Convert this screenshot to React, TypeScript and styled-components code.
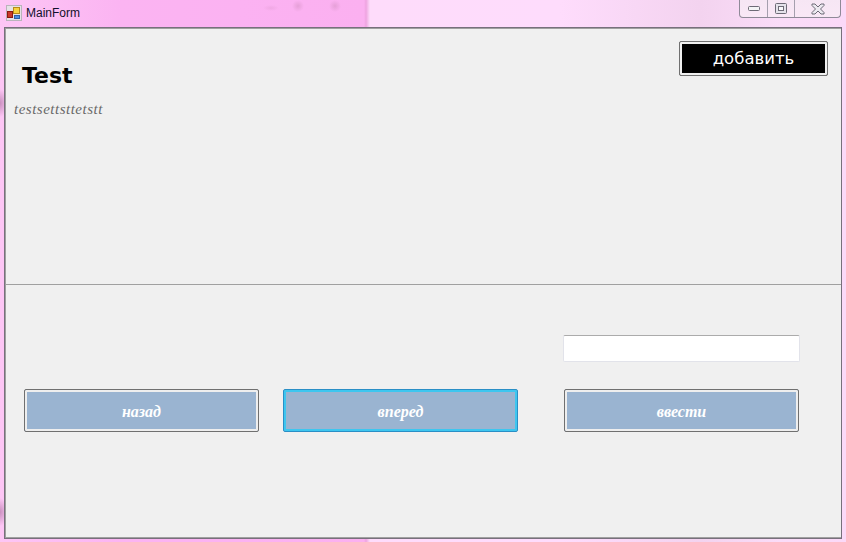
import React from 'react'
import styled, { createGlobalStyle } from 'styled-components'

const GlobalStyle = createGlobalStyle`
    html, body {
        margin: 0;
        padding: 0;
    }
    body {
        width: 846px;
        height: 542px;
        overflow: hidden;
        font-family: "Liberation Sans", Arial, sans-serif;
    }
`

const Window = styled.div`
    width: 846px;
    height: 542px;
    box-sizing: border-box;
    display: flex;
    flex-direction: column;
    padding: 0 4px 3px 4px;
    background:
        radial-gradient(ellipse 8px 14px at 0px 103px, #c98fbe, transparent),
        radial-gradient(ellipse 8px 14px at 0px 512px, #c98fbe, transparent),
        radial-gradient(ellipse 6px 6px at 298px 6px, #e6a0d8, transparent),
        radial-gradient(ellipse 6px 6px at 335px 6px, #e6a0d8, transparent),
        radial-gradient(ellipse 8px 3px at 271px 8px, #f0a8e4, transparent),
        linear-gradient(90deg,
            #fdc6f5 0px, #fbb4f2 120px, #fbb2f2 240px, #fbb0f0 364px, #eea4e0 366px,
            #fedcfb 370px, #fedcfc 560px, #f3d3ef 700px, #fadcf8 780px, #fbd9f8 846px);
`

const TitleBar = styled.div`
    height: 27px;
    flex: none;
    display: flex;
    justify-content: space-between;
    align-items: flex-start;
    margin-right: -1px;
`

const TitleLeft = styled.div`
    display: flex;
    align-items: center;
    gap: 4px;
    height: 26px;
    padding-left: 2px;
    font-size: 12px;
    color: #10102a;
`

const CaptionGroup = styled.div`
    display: flex;
    height: 17px;
    margin-right: 2px;
    border: 1px solid #8f8a98;
    border-top: none;
    border-radius: 0 0 4px 4px;
    background: linear-gradient(180deg, #f6e6f4, #f9e8f6);
`

const CaptionButton = styled.div<{ $w: number; $last?: boolean }>`
    width: ${p => p.$w}px;
    display: flex;
    align-items: center;
    justify-content: center;
    box-sizing: border-box;
    border-right: ${p => (p.$last ? 'none' : '1px solid #a59fae')};
`

const Frame = styled.div`
    flex: 1;
    display: flex;
    flex-direction: column;
    min-height: 0;
    border: 1px solid #77707c;
    box-shadow: inset 1px 1px 0 #a0a0a0, inset 0 -1px 0 #a0a0a0;
    padding: 1px 0 1px 1px;
    background: #f0f0f0;
`

const TopPanel = styled.div`
    height: 256px;
    flex: none;
    box-sizing: border-box;
    display: flex;
    justify-content: space-between;
    align-items: flex-start;
    border-bottom: 1px solid #a0a0a0;
    padding: 12px 13px 0 8px;
`

const Intro = styled.div`
    display: flex;
    flex-direction: column;
    align-items: flex-start;
`

const Heading = styled.h1`
    margin: 23px 0 0 8px;
    font-family: "DejaVu Sans", Verdana, sans-serif;
    font-weight: 700;
    font-size: 22px;
    line-height: 24px;
    color: #000;
`

const Subtitle = styled.p`
    margin: 13px 0 0 0;
    font-family: "Liberation Serif", Cambria, serif;
    font-style: italic;
    font-size: 15px;
    letter-spacing: 0.5px;
    line-height: 16px;
    color: #696969;
`

const AddButton = styled.button`
    width: 149px;
    height: 35px;
    box-sizing: border-box;
    padding: 0;
    border: 1px solid #707070;
    border-radius: 2px;
    outline: 2px solid #f0f0f0;
    outline-offset: -3px;
    background: #000;
    color: #fff;
    font-family: "DejaVu Sans", Verdana, sans-serif;
    font-size: 16.5px;
`

const BottomPanel = styled.div`
    flex: 1;
    display: grid;
    grid-template-columns: 235px 235px 237px;
    column-gap: 24px;
    grid-template-rows: 27px 43px;
    row-gap: 27px;
    align-content: start;
    padding: 50px 0 0 18px;
`

const ActionButton = styled.button<{ $focused?: boolean }>`
    width: 235px;
    height: 43px;
    box-sizing: border-box;
    padding: 2px 0 0;
    border: 1px solid ${p => (p.$focused ? '#2a8fc6' : '#707070')};
    border-radius: 2px;
    background: #9ab4d1;
    box-shadow: inset 0 0 0 2px ${p => (p.$focused ? '#3ec6ef' : '#eeeeee')};
    color: #fff;
    font-family: "Liberation Serif", Cambria, serif;
    font-weight: 700;
    font-style: italic;
    font-size: 16px;
`

const TextInput = styled.input`
    grid-column: 3;
    width: 237px;
    height: 27px;
    margin-left: 21px;
    box-sizing: border-box;
    padding: 0 4px;
    background: #fff;
    border: 1px solid #e2e3ea;
    border-top-color: #ababab;
    border-radius: 2px;
    outline: none;
`

const ThirdButton = styled(ActionButton)`
    margin-left: 22px;
`

function AppIcon() {
    return (
        <svg width="16" height="16" viewBox="0 0 16 16">
            <rect x="0.5" y="0.5" width="15" height="15" fill="#e6e2e6" stroke="#b9b4bb" />
            <rect x="1.5" y="6.5" width="5" height="6" fill="#c93a2a" stroke="#8a1c12" />
            <rect x="7.5" y="2.5" width="6" height="6" fill="#f7d23e" stroke="#b88a18" />
            <rect x="8.5" y="10.5" width="5" height="3" fill="#4f8fe0" stroke="#2f62a8" />
        </svg>
    )
}

export default function App() {
    return (
        <>
            <GlobalStyle />
            <Window>
                <TitleBar>
                    <TitleLeft>
                        <AppIcon />
                        <span>MainForm</span>
                    </TitleLeft>
                    <CaptionGroup>
                        <CaptionButton $w={28}>
                            <svg width="12" height="7" viewBox="0 0 12 7">
                                <rect x="0.5" y="1.5" width="11" height="4" rx="1" fill="#f4f4f6" stroke="#6d6a76" />
                            </svg>
                        </CaptionButton>
                        <CaptionButton $w={27}>
                            <svg width="12" height="11" viewBox="0 0 12 11">
                                <rect x="0.5" y="0.5" width="11" height="10" rx="1" fill="#e4e2ea" stroke="#6d6a76" />
                                <rect x="3.5" y="3.5" width="5" height="4" fill="#f8f8fa" stroke="#6d6a76" />
                            </svg>
                        </CaptionButton>
                        <CaptionButton $w={45} $last>
                            <svg width="14" height="12" viewBox="0 0 14 12">
                                <path
                                    d="M1 1h3l3 3 3-3h3v1.5L9.5 6 13 9.5V11h-3L7 8l-3 3H1V9.5L4.5 6 1 2.5z"
                                    fill="#ece9f0"
                                    stroke="#6d6a76"
                                    strokeWidth="1"
                                />
                            </svg>
                        </CaptionButton>
                    </CaptionGroup>
                </TitleBar>
                <Frame>
                    <TopPanel>
                        <Intro>
                            <Heading>Test</Heading>
                            <Subtitle>testsettsttetstt</Subtitle>
                        </Intro>
                        <AddButton>добавить</AddButton>
                    </TopPanel>
                    <BottomPanel>
                        <TextInput />
                        <ActionButton>назад</ActionButton>
                        <ActionButton $focused>вперед</ActionButton>
                        <ThirdButton>ввести</ThirdButton>
                    </BottomPanel>
                </Frame>
            </Window>
        </>
    )
}
